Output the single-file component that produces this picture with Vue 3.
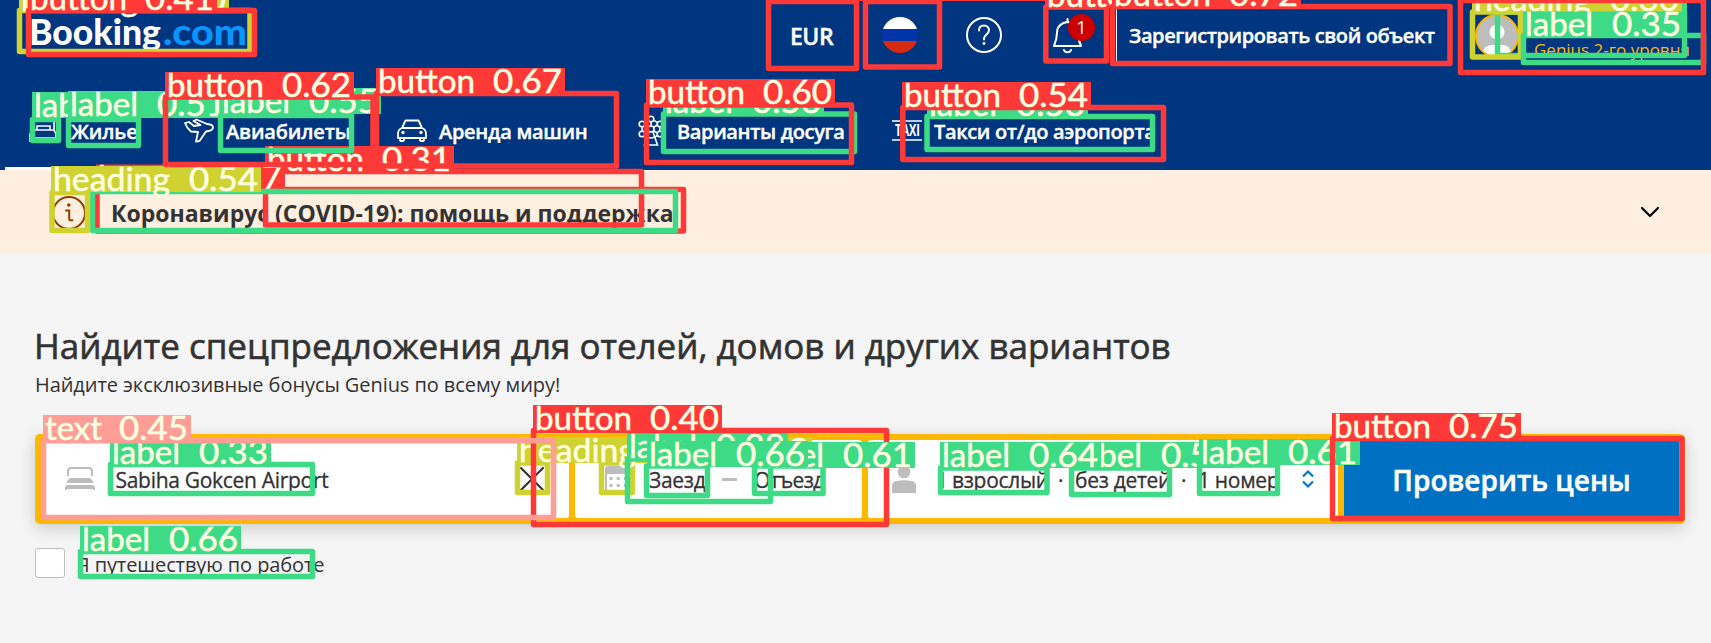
<script setup>
const marks = [
  { k: 'red', t: '', b: [768.5, 1.5, 856.5, 68.5] },
  { k: 'red', t: '', b: [865.5, 1.5, 939.5, 67] },
  { k: 'green', t: 'label 0.30', b: [32.5, 119.5, 58.5, 140.5], l: [32, 92, 161, 26] },
  { k: 'green', t: '', b: [1497.5, 12, 1684.5, 55.5] },
  { k: 'yellow', t: 'heading 0.33', b: [601.5, 463, 632.5, 492.5], l: [602, 437, 210, 26] },
  { k: 'red', t: 'button 0.31', b: [265.5, 171.5, 641.5, 225], l: [265, 146, 189, 26] },
  { k: 'green', t: 'label 0.33', b: [110.5, 464.5, 312.5, 493.5], l: [110, 439, 161, 26] },
  { k: 'yellow', t: 'heading 0.35', b: [517.5, 463, 547.5, 492.5], l: [517, 437, 210, 26] },
  { k: 'yellow', t: 'heading 0.30', b: [1472.5, 12, 1520.5, 57], l: [1472, -14, 210, 26] },
  { k: 'green', t: 'label 0.35', b: [1523.5, 35.5, 1703.5, 62.5], l: [1523, 11.5, 161, 26] },
  { k: 'green', t: 'label 0.38', b: [627.5, 459, 770.5, 501.5], l: [627, 433, 161, 26] },
  { k: 'red', t: 'button 0.40', b: [533.5, 430.5, 886.5, 524.5], l: [533, 405, 189, 26] },
  { k: 'yellow', t: 'heading 0.40', b: [19.5, 10.5, 250, 51.5], l: [19, -14, 210, 26] },
  { k: 'red', t: 'button 0.41', b: [28.5, 10.5, 254.5, 54.5], l: [28, -15, 189, 27] },
  { k: 'pink', t: 'text 0.45', b: [43.5, 440.8, 553.5, 517.5], l: [43, 415, 148, 26] },
  { k: 'red', t: 'button 0.47', b: [97, 189.5, 683.5, 231], l: [96, 164.5, 189, 26] },
  { k: 'green', t: '', b: [92.5, 191.5, 675.5, 230.5] },
  { k: 'green', t: 'label 0.51', b: [68.5, 119.5, 138.5, 145.5], l: [68, 91, 161, 27] },
  { k: 'green', t: 'label 0.53', b: [927, 116.5, 1152.5, 149.5], l: [927, 91, 161, 26] },
  { k: 'red', t: 'button 0.54', b: [902.8, 107.5, 1163.5, 159.5], l: [902, 82, 189, 26] },
  { k: 'yellow', t: 'heading 0.54', b: [52, 192.5, 87.5, 230.5], l: [51, 166, 210, 26] },
  { k: 'red', t: '', b: [1460.5, 0.5, 1703.5, 72.5] },
  { k: 'red', t: 'button 0.54', b: [1045.8, 7, 1106.5, 61], l: [1045, -18, 189, 26] },
  { k: 'green', t: 'label 0.55', b: [220.5, 115.5, 351.5, 150.5], l: [220, 88, 161, 26] },
  { k: 'green', t: 'label 0.56', b: [663.5, 114, 854.5, 151.5], l: [663, 88, 161, 26] },
  { k: 'green', t: 'label 0.58', b: [1071.5, 468, 1169.5, 494.5], l: [1072, 442, 161, 26] },
  { k: 'red', t: 'button 0.60', b: [646.5, 105, 851.5, 162.5], l: [646, 79, 189, 27] },
  { k: 'green', t: 'label 0.61', b: [754.5, 466, 823, 493.5], l: [754, 442, 161, 26] },
  { k: 'red', t: 'button 0.62', b: [165.5, 97, 373, 164.5], l: [165, 72, 189, 26] },
  { k: 'green', t: 'label 0.64', b: [940.5, 468, 1047, 492.5], l: [940, 442, 161, 26] },
  { k: 'green', t: 'label 0.61', b: [1199.5, 465, 1277.5, 493.5], l: [1199, 439, 161, 26] },
  { k: 'green', t: 'label 0.66', b: [80.5, 551.5, 312.5, 576.5], l: [80, 526, 161, 26] },
  { k: 'green', t: 'label 0.66', b: [646.5, 466, 707.5, 495.5], l: [647, 441, 161, 26] },
  { k: 'red', t: 'button 0.67', b: [376.5, 93.5, 616.5, 166], l: [376, 68, 189, 26] },
  { k: 'red', t: 'button 0.72', b: [1112.5, 6.5, 1450, 63.5], l: [1112, -19, 189, 26] },
  { k: 'red', t: 'button 0.75', b: [1332.5, 438.5, 1682, 518.5], l: [1332, 413, 189, 26] },
]
const wordWidth = { button: 97, label: 68, heading: 117, text: 57 }
const parts = (m) => {
  const [word, score] = m.t.split(' ')
  return [
    { s: word, x: m.l[0] + 2, w: wordWidth[word] },
    { s: score, x: m.l[0] + m.l[2] - 72, w: 69 },
  ]
}
</script>

<template>
  <div class="page">
    <header class="header">
      <div class="top">
        <svg class="logo" width="230" height="46" viewBox="0 0 230 46">
          <text x="0" y="32" textLength="132" lengthAdjust="spacingAndGlyphs" fill="#fff">Booking</text>
          <text x="134" y="32" textLength="84" lengthAdjust="spacingAndGlyphs" fill="#0896ff">.com</text>
        </svg>
        <span class="eur">EUR</span>
        <svg class="up" width="36" height="36" viewBox="0 0 36 36">
          <clipPath id="flag"><circle cx="18" cy="18" r="18" /></clipPath>
          <g clip-path="url(#flag)">
            <rect width="36" height="12" fill="#fff" />
            <rect y="12" width="36" height="12" fill="#0034a9" />
            <rect y="24" width="36" height="12" fill="#d62a12" />
          </g>
        </svg>
        <svg class="up" width="36" height="36" viewBox="0 0 36 36" fill="none" stroke="#fff" stroke-width="2">
          <circle cx="18" cy="18" r="17" />
          <path d="M13 13.500c0-3 2-5 5-5s5 2 5 4.800c0 4-5 4.200-5 8.200v1" stroke-linecap="round" />
          <circle cx="18" cy="26.500" r="1.400" fill="#fff" stroke="none" />
        </svg>
        <div class="bell">
          <svg width="30" height="36" viewBox="0 0 30 36" fill="none" stroke="#fff" stroke-width="2" stroke-linecap="round" stroke-linejoin="round">
            <path d="M14.500 1v3c-6 .5-10.500 4.500-10.500 10.500 0 6-1 9-3 13.500h27c-2-4-3-7.500-3-13.500C25 8.500 20.500 4.500 14.500 4M11 32c1 3 6 3 7 0" />
          </svg>
          <span class="badge">1</span>
        </div>
        <span class="register">Зарегистрировать свой объект</span>
        <svg width="44" height="44" viewBox="0 0 44 44">
          <clipPath id="ava"><circle cx="22" cy="22" r="20" /></clipPath>
          <circle cx="22" cy="22" r="21" fill="#bdbdbd" stroke="#ffb700" stroke-width="2" />
          <g clip-path="url(#ava)" fill="#fff">
            <circle cx="22" cy="18" r="7.500" />
            <path d="M8 44v-5a9 8 0 0 1 9-8h10a9 8 0 0 1 9 8v5z" />
          </g>
        </svg>
        <span class="genius">Genius 2-го уровня</span>
      </div>
      <nav class="nav">
        <a class="item">
          <svg width="30" height="26" viewBox="0 0 30 26" fill="none" stroke="#fff" stroke-width="1.600">
            <path d="M1 24V16l2-4V3h22v9l2 4v8M1 20h26M3 12h22M8 12V8h13v4" />
          </svg>
          <span class="n1">Жилье</span>
        </a>
        <a class="item">
          <svg width="30" height="26" viewBox="0 0 30 26" fill="none" stroke="#fff" stroke-width="1.800" stroke-linejoin="round">
            <path d="M1 5l4-1 5 4 6.500-1L9.500 3l3-1.500L23 6c3 .2 6 1 6 3.500S26 13 22 13.500L15.500 23l-3.500.5 2-9.500-7-.5C4 11 2 8 1 5z" />
          </svg>
          <span class="n2">Авиабилеты</span>
        </a>
        <a class="item">
          <svg width="30" height="26" viewBox="0 0 30 26" fill="none" stroke="#fff" stroke-width="1.800" stroke-linejoin="round">
            <path d="M5 10l3.500-7.500h13L25 10M5 10h20c3 1 4 3 4 6v4H1v-4c0-3 1-5 4-6zM3 20v2c0 1.500 4 1.500 4 0v-2M23 20v2c0 1.500 4 1.500 4 0v-2" />
            <g fill="#fff" stroke="none"><circle cx="6" cy="14.500" r="1.700" /><circle cx="24" cy="14.500" r="1.700" /></g>
          </svg>
          <span class="n3">Аренда машин</span>
        </a>
        <a class="item">
          <svg width="28" height="32" viewBox="0 0 28 32" fill="none" stroke="#fff" stroke-width="1.600">
            <circle cx="14" cy="14" r="9" /><circle cx="14" cy="14" r="3" />
            <path d="M14 5v6M6 9l5 3M22 9l-5 3M6 19l5-3M22 19l-5-3M12 17L7.500 30h13L16 17" />
            <g fill="#003580">
              <circle cx="14" cy="4" r="2.800" /><circle cx="5" cy="9" r="2.800" /><circle cx="23" cy="9" r="2.800" />
              <circle cx="5" cy="19" r="2.800" /><circle cx="23" cy="19" r="2.800" />
            </g>
          </svg>
          <span class="n4">Варианты досуга</span>
        </a>
        <a class="item">
          <svg class="taxi" width="30" height="26" viewBox="0 0 30 26">
            <path d="M0 3h30M0 22h30" stroke="#fff" stroke-width="1.700" />
            <text x="3" y="18" textLength="25" lengthAdjust="spacingAndGlyphs" fill="#fff">TAXI</text>
          </svg>
          <span class="n5">Такси от/до аэропорта</span>
        </a>
      </nav>
      <div class="underline"></div>
    </header>

    <section class="banner">
      <svg width="34" height="34" viewBox="0 0 34 34" fill="none" stroke="#923e01" stroke-width="2">
        <circle cx="17" cy="17" r="16" />
        <path d="M14 14.500h3.200v8.500c0 1 .8 1.300 2 1.300h1.300" stroke-linecap="round" />
        <circle cx="16.800" cy="9" r="1.800" fill="#923e01" stroke="none" />
      </svg>
      <span class="covid">Коронавирус (COVID-19): помощь и поддержка</span>
      <svg class="chev" width="20" height="14" viewBox="0 0 20 14" fill="none" stroke="#000" stroke-width="2.200" stroke-linecap="round" stroke-linejoin="round">
        <path d="M2 3l8 8 8-8" />
      </svg>
    </section>

    <main class="main">
      <h1 class="title">Найдите спецпредложения для отелей, домов и других вариантов</h1>
      <p class="sub">Найдите эксклюзивные бонусы Genius по всему миру!</p>
      <div class="search">
        <div class="field place">
          <svg width="30" height="26" viewBox="0 0 30 26">
            <path d="M3 10V5a3 3 0 0 1 3-3h18a3 3 0 0 1 3 3v5" fill="none" stroke="#bdbdbd" stroke-width="2" />
            <path d="M2 17c0-3 2-5 5-5h16c3 0 5 2 5 5zM0 24v-2a3 3 0 0 1 3-3h24a3 3 0 0 1 3 3v2h-2v-1H2v1z" fill="#bdbdbd" />
          </svg>
          <span class="airport">Sabiha Gokcen Airport</span>
          <svg width="24" height="24" viewBox="0 0 24 24" stroke="#333" stroke-width="2.200" stroke-linecap="round">
            <path d="M1 1l22 22M23 1L1 23" />
          </svg>
        </div>
        <div class="field dates">
          <svg width="26" height="28" viewBox="0 0 26 28">
            <rect x="1" y="2" width="24" height="24" rx="2" fill="none" stroke="#bdbdbd" stroke-width="2" />
            <path d="M1 3h24v6H1z" fill="#bdbdbd" />
            <path d="M4.500 13.500h18M4.500 20.500h18" stroke="#bdbdbd" stroke-width="3" stroke-dasharray="3 4.200" />
          </svg>
          <span class="in">Заезд</span>
          <i class="dash"></i>
          <span class="out">Отъезд</span>
        </div>
        <div class="field guests">
          <svg width="24" height="28" viewBox="0 0 24 28" fill="#bdbdbd">
            <circle cx="12" cy="7" r="6.300" />
            <path d="M0 28v-7c0-3 2-5 5-5 4-1 10-1 14 0 3 0 5 2 5 5v7z" />
          </svg>
          <span class="g0">1</span>
          <span class="g1">взрослый</span>
          <span class="dot">·</span>
          <span class="g2">без детей</span>
          <span class="dot">·</span>
          <span class="g3">1 номер</span>
          <svg width="12" height="20" viewBox="0 0 12 20" fill="none" stroke="#0077cc" stroke-width="2.200">
            <path d="M1 7.500l5-5 5 5M1 12.500l5 5 5-5" />
          </svg>
        </div>
        <button class="submit">Проверить цены</button>
      </div>
      <label class="work"><i class="check"></i><span>Я путешествую по работе</span></label>
    </main>

    <svg class="overlay" width="1711" height="643" viewBox="0 0 1711 643">
      <path d="M768 .5H1054" stroke="#ff3838" />
      <path d="M1680 12H1687V3H1680z" fill="#3ddb86" />
      <g v-for="(m, i) in marks" :key="i" :class="m.k">
        <rect class="frame" :x="m.b[0]" :y="m.b[1]" :width="m.b[2] - m.b[0]" :height="m.b[3] - m.b[1]" />
        <template v-if="m.t">
          <rect class="tag" :x="m.l[0]" :y="m.l[1]" :width="m.l[2]" :height="m.l[3]" />
          <text v-for="p in parts(m)" :key="p.s" :x="p.x" :y="m.l[1] + 24.500" :textLength="p.w" lengthAdjust="spacingAndGlyphs">{{ p.s }}</text>
        </template>
      </g>
    </svg>
  </div>
</template>

<style>
html, body { margin: 0; overflow: hidden; }
</style>

<style scoped>
.page { position: relative; width: 1711px; height: 643px; overflow: hidden; background: #f5f5f5; color: #333; font-family: "Open Sans", "Noto Sans", sans-serif; font-size: 20px; }
.page span { white-space: nowrap; }
.page svg { display: block; flex: none; }
.header { height: 170px; background: #003580; color: #fff; font-weight: 600; display: flex; flex-direction: column; }
.top { height: 72px; padding-left: 29px; display: grid; grid-template-columns: 761px 92px 84px 87px 63px 359px 59px 1fr; align-items: center; }
.logo { align-self: center; }
.logo text { font: 900 36px Lato, sans-serif; }
.eur { font-size: 23px; letter-spacing: -0.5px; -webkit-text-stroke: .4px; }
.up { margin-bottom: 2px; }
.bell { position: relative; }
.badge { position: absolute; left: 15px; top: -4px; width: 27px; height: 27px; border-radius: 50%; background: #c00; font-size: 18px; font-weight: 400; line-height: 27px; text-align: center; }
.register { box-sizing: border-box; width: 335px; height: 58px; line-height: 56px; border: 1px solid #fff; padding-left: 12px; margin-top: -1px; letter-spacing: -.4px; -webkit-text-stroke: .4px; }
.genius { color: #ffb700; font-size: 17px; font-weight: 400; line-height: 20px; margin-top: 27px; }
.nav { height: 50px; margin-top: 34px; padding-left: 29px; display: grid; grid-template-columns: 155px 213px 240px 255px 300px; align-items: center; }
.item { display: flex; align-items: center; gap: 12px; -webkit-text-stroke: .4px; }
.n1 { letter-spacing: -.1px; }
.n2 { letter-spacing: -.15px; }
.n3 { letter-spacing: -.28px; }
.n4 { letter-spacing: -.36px; }
.n5 { letter-spacing: -.33px; }
.taxi text { font: 700 16px "Open Sans", sans-serif; }
.underline { width: 150px; height: 3px; margin: 11px 0 0 5px; background: #fff; }
.banner { box-sizing: border-box; height: 84px; padding: 0 51px 0 52px; display: flex; align-items: center; background: #ffefe0; }
.banner > svg:first-child { margin-top: 1px; }
.covid { margin: 1px 0 0 25px; font-size: 23px; font-weight: 700; }
.chev { margin-left: auto; }
.main { padding: 70px 26px 0 35px; }
.title { margin: 0 0 0 -1px; height: 44px; line-height: 44px; font-size: 35px; font-weight: 500; letter-spacing: -.02px; white-space: nowrap; -webkit-text-stroke: .6px; }
.sub { margin: 0; height: 30px; line-height: 30px; letter-spacing: -.07px; white-space: nowrap; }
.title + .sub { margin-top: 2px; }
.search { box-sizing: border-box; width: 1650px; height: 90px; margin-top: 34px; padding: 6px; display: grid; grid-template-columns: 528px 287px 470px 1fr; column-gap: 6px; background: #ffb700; border-radius: 5px; box-shadow: 0 4px 16px rgba(0, 0, 0, .18); }
.field { display: flex; align-items: center; background: #fff; border-radius: 3px; font-size: 21px; font-weight: 500; }
.field span { position: relative; top: 1px; letter-spacing: -.3px; -webkit-text-stroke: .3px; }
.place { padding-left: 24px; }
.airport { width: 404px; margin-left: 20.500px; }
.dates { padding-left: 30px; }
.in { width: 73px; margin-left: 18px; }
.dash { width: 15px; height: 3px; background: #bdbdbd; margin-right: 17px; }
.field .out { letter-spacing: -.7px; }
.guests { padding-left: 24px; }
.g0 { width: 16px; margin-left: 20px; }
.g1 { width: 106px; }
.dot { width: 17px; }
.g2 { width: 106px; }
.g3 { width: 104px; }
.submit { border: 0; padding: 2px 0 0; background: #0071c2; color: #fff; font: 600 28px "Open Sans", sans-serif; border-radius: 2px; -webkit-text-stroke: .5px; }
.work { display: flex; align-items: center; margin-top: 24px; height: 30px; letter-spacing: -.1px; }
.work span { padding-top: 2px; }
.check { box-sizing: border-box; width: 30px; height: 30px; border: 1px solid #bdbdbd; border-radius: 3px; background: #fff; margin-right: 12px; }
.overlay { position: absolute; left: 0; top: 0; }
.frame { fill: none; stroke: currentColor; stroke-width: 5.500; stroke-linejoin: round; }
.tag { fill: currentColor; }
.overlay text { font: 400 32px Lato, sans-serif; fill: #ffffe1; stroke: #ffffe1; stroke-width: .5; }
.red { color: #ff3838; }
.green { color: #3ddb86; }
.yellow { color: #cfd231; }
.pink { color: #ff9d97; }
</style>
